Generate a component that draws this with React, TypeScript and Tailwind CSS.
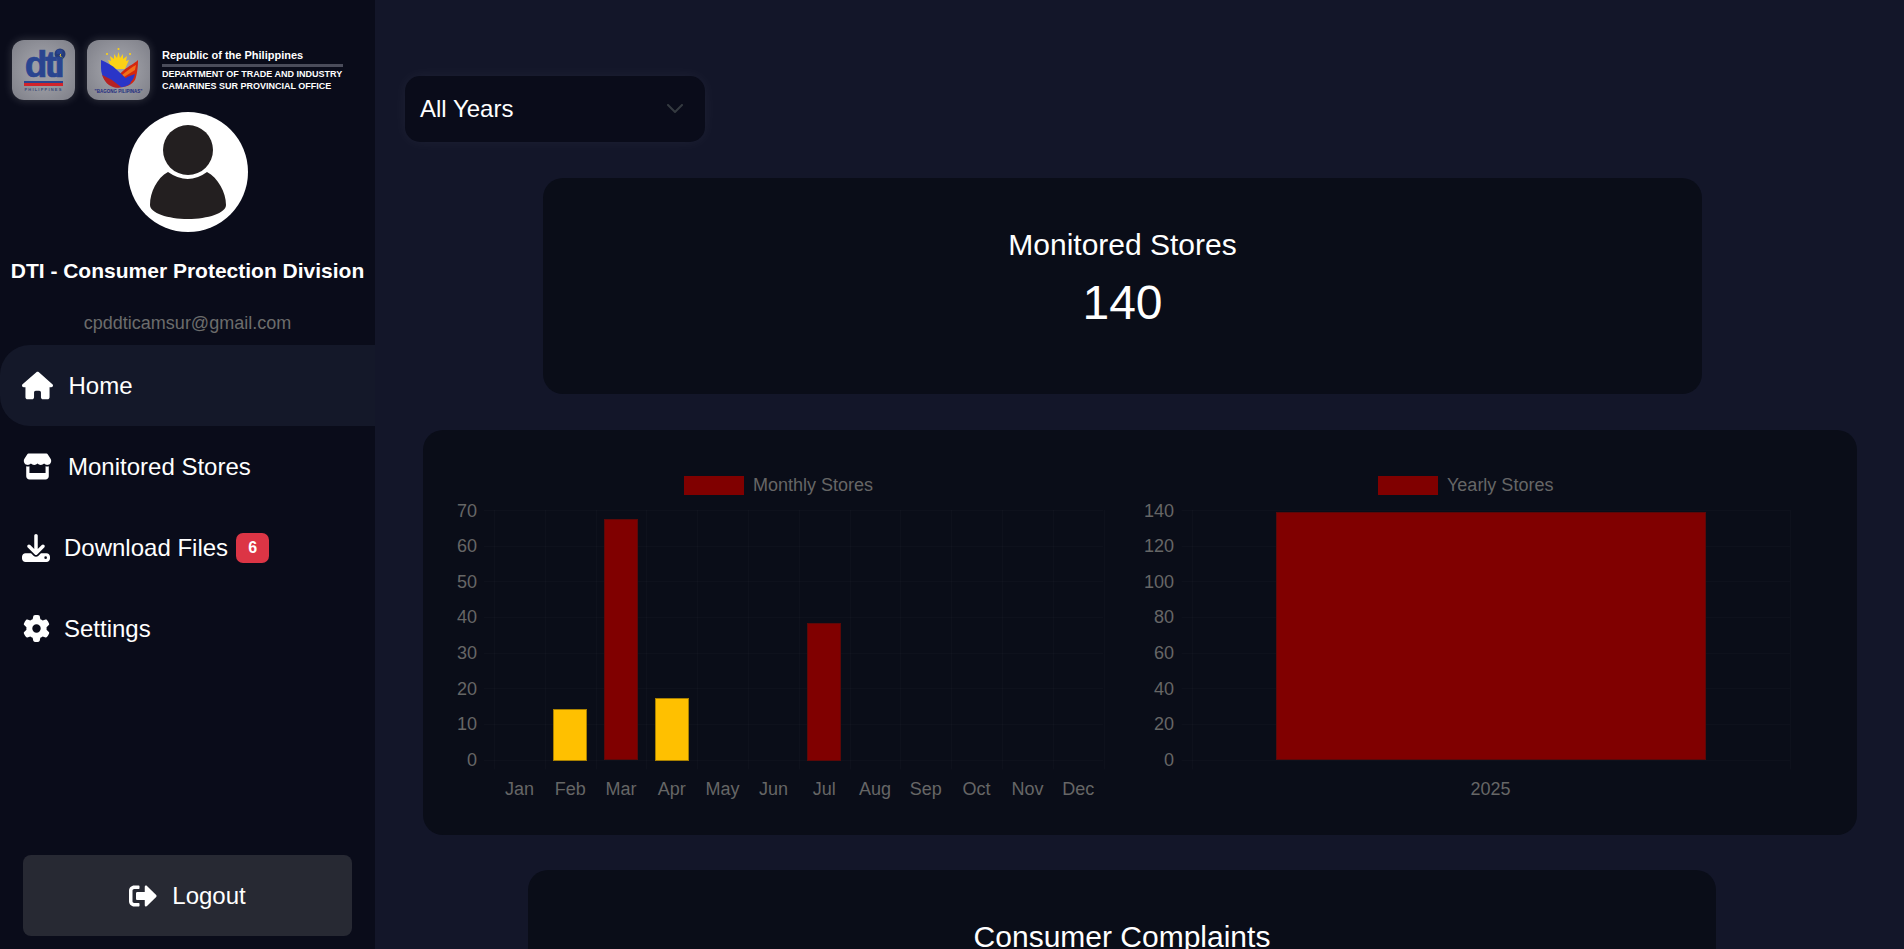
import React from "react";
import { FaHouse, FaStore, FaDownload, FaGear } from "react-icons/fa6";
import { FaSignOutAlt } from "react-icons/fa";

const months = ["Jan", "Feb", "Mar", "Apr", "May", "Jun", "Jul", "Aug", "Sep", "Oct", "Nov", "Dec"];
const monthly = [0, 14.3, 67.4, 17.3, 0, 0, 38.4, 0, 0, 0, 0, 0];

function Grid({ left, right, top, bottom, xs, rows }: { left: number; right: number; top: number; bottom: number; xs: number[]; rows: number }) {
  const ys = Array.from({ length: rows + 1 }, (_, i) => Math.round(top + ((bottom - top) * i) / rows) + 0.5);
  return (
    <g className="stroke-[#ffffff05]">
      {ys.map((y) => (
        <line key={y} x1={left - 10} x2={right} y1={y} y2={y} />
      ))}
      {xs.map((x) => (
        <line key={x} x1={Math.round(x) + 0.5} x2={Math.round(x) + 0.5} y1={top} y2={bottom + 10} />
      ))}
    </g>
  );
}

function MonthlyChart() {
  const left = 71;
  const step = 50.8;
  const top = 80;
  const bottom = 329.5;
  const unit = (bottom - top) / 70;
  return (
    <svg viewBox="0 0 717 405" className="w-[717px] h-[405px] shrink-0">
      <Grid left={left} right={680} top={top} bottom={bottom} xs={Array.from({ length: 13 }, (_, i) => left + i * step)} rows={7} />
      <rect x={261} y={46} width={60} height={19} className="fill-[#800000]" />
      <text x={330} y={61} className="fill-[#666666] text-[18px]">Monthly Stores</text>
      {[70, 60, 50, 40, 30, 20, 10, 0].map((v, i) => (
        <text key={v} x={54} y={top + (i * (bottom - top)) / 7 + 6.5} textAnchor="end" className="fill-[#666666] text-[18px]">{v}</text>
      ))}
      {months.map((m, i) => (
        <text key={m} x={left + step * (i + 0.5)} y={364.5} textAnchor="middle" className="fill-[#666666] text-[18px]">{m}</text>
      ))}
      {monthly.map((v, i) =>
        v > 0 ? (
          <rect
            key={i}
            x={Math.round(left + step * i + 8.4) + 0.5}
            y={Math.round(bottom - v * unit) + 0.5}
            width={33}
            height={Math.round(v * unit)}
            className={i === 1 || i === 3 ? "fill-[#ffc000] stroke-[#a88000]" : "fill-[#800000] stroke-[#5c0808]"}
          />
        ) : null
      )}
    </svg>
  );
}

function YearlyChart() {
  const top = 80;
  const bottom = 329.5;
  return (
    <svg viewBox="0 0 717 405" className="w-[717px] h-[405px] shrink-0">
      <Grid left={51.5} right={650} top={top} bottom={bottom} xs={[51.5, 650]} rows={7} />
      <rect x={238} y={46} width={60} height={19} className="fill-[#800000]" />
      <text x={307} y={61} className="fill-[#666666] text-[18px]">Yearly Stores</text>
      {[140, 120, 100, 80, 60, 40, 20, 0].map((v, i) => (
        <text key={v} x={34} y={top + (i * (bottom - top)) / 7 + 6.5} textAnchor="end" className="fill-[#666666] text-[18px]">{v}</text>
      ))}
      <text x={350.5} y={364.5} textAnchor="middle" className="fill-[#666666] text-[18px]">2025</text>
      <rect x={136.5} y={82.5} width={429} height={247} className="fill-[#800000] stroke-[#5c0808]" />
    </svg>
  );
}

function DtiLogo() {
  return (
    <div className="w-[63px] h-[60px] rounded-[12px] bg-[radial-gradient(circle,#9c9da4_30%,#7d7e87_100%)] shadow-[0_0_10px_rgba(255,255,255,0.18)] relative overflow-hidden flex flex-col items-center">
      <svg viewBox="0 0 63 60" className="absolute inset-0 w-full h-full">
        <circle cx="48" cy="14" r="5.5" fill="#243a78" />
        <path d="M46 11l3 2-1 3 3 2" stroke="#e8c92f" strokeWidth="1" fill="none" />
        <rect x="12" y="41" width="39" height="2" fill="#2a4590" />
        <rect x="12" y="43" width="39" height="3" fill="#d2232a" />
      </svg>
      <span className="relative mt-[8px] h-[33px] text-[#2a4590] text-[37px] leading-[33px] font-bold tracking-[-2.5px] [-webkit-text-stroke:0.7px_#2a4590]">dti</span>
      <span className="relative mt-[6px] text-[4px] leading-[5px] tracking-[1.2px] text-[#3b4a78] font-bold">PHILIPPINES</span>
    </div>
  );
}

function PilipinasLogo() {
  return (
    <div className="w-[63px] h-[60px] rounded-[12px] bg-[radial-gradient(circle,#9c9da4_30%,#7d7e87_100%)] shadow-[0_0_10px_rgba(255,255,255,0.18)] relative overflow-hidden">
      <svg viewBox="0 0 63 60" className="absolute inset-0 w-full h-full">
        <g fill="#fcd116">
          <circle cx="20" cy="14" r="1.100" />
          <circle cx="31.500" cy="9" r="1.100" />
          <circle cx="43" cy="14" r="1.100" />
          <path d="M31.500 12l1.500 6 3-4 0 5 4-3-1 5 3-1-4 9H25l-4-9 3 1-1-5 4 3 0-5 3 4z" />
        </g>
        <path d="M51 20c-3 3-9 6-14 10l-13 12 5 5c8 1 15-1 19-7 2-5 3-13 3-20z" fill="#d4260e" />
        <path d="M49 25c-4 2-9 6-14 10l2 2 11-7z" fill="#f0701a" />
        <path d="M14 20c5 2 11 5 16 10l14 13c-4 4-10 5-14 4-10-2-16-10-16-19z" fill="#2a35c8" />
        <path d="M15 35c3 1 6 3 10 5l9 7c-2 1-6 1-8 0-6-2-9-7-11-12z" fill="#b52222" />
        <path d="M40 37l8-3c-1 4-3 8-8 11l-4-3z" fill="#2a35c8" />
      </svg>
      <span className="absolute left-0 right-0 top-[49px] text-center text-[4.500px] leading-[5px] font-bold text-[#1e2a80] whitespace-nowrap">"BAGONG PILIPINAS"</span>
    </div>
  );
}

function Avatar() {
  return (
    <svg viewBox="0 0 120 120" className="w-[120px] h-[120px] mt-[12px] mx-auto shrink-0">
      <circle cx="60" cy="60" r="60" fill="#ffffff" />
      <circle cx="60" cy="38" r="25" fill="#231f20" />
      <path d="M40 60Q60 74 79 60C90 66 98 80 98 93C98 101 80 107 60 107C40 107 22 101 22 93C22 80 29 66 40 60Z" fill="#231f20" />
    </svg>
  );
}

function NavItem({ icon, label, active, pad, textGap, badge }: { icon: React.ReactNode; label: string; active?: boolean; pad: string; textGap: string; badge?: string }) {
  return (
    <div className={`h-[81px] flex items-center text-white text-[24px] rounded-l-[30px] ${pad} ${active ? "bg-[#141829]" : ""}`}>
      {icon}
      <span className={textGap}>{label}</span>
      {badge ? (
        <span className="ml-[8px] w-[33px] h-[30px] rounded-[7px] bg-[#dc3545] text-white font-bold text-[16px] flex items-center justify-center">{badge}</span>
      ) : null}
    </div>
  );
}

export default function App() {
  return (
    <div className="h-screen w-full flex overflow-hidden bg-[#131629] font-['Liberation_Sans',Arial,sans-serif] text-white">
      <aside className="w-[375px] shrink-0 h-full bg-[#0a0c1a] flex flex-col pt-[40px]">
        <div className="flex items-center pl-[12px]">
          <DtiLogo />
          <div className="ml-[12px]"><PilipinasLogo /></div>
          <div className="ml-[12px] w-[181px] flex flex-col font-bold">
            <span className="text-[11px] leading-[13px] mt-[1px] whitespace-nowrap">Republic of the Philippines</span>
            <div className="h-[3px] bg-[#4a4c5a] mt-[2px] mb-[1px]" />
            <span className="text-[9px] leading-[12px] whitespace-nowrap">DEPARTMENT OF TRADE AND INDUSTRY</span>
            <span className="text-[9px] leading-[12px] whitespace-nowrap">CAMARINES SUR PROVINCIAL OFFICE</span>
          </div>
        </div>
        <Avatar />
        <div className="mt-[26px] text-center text-[21px] leading-[25px] font-bold whitespace-nowrap">DTI - Consumer Protection Division</div>
        <div className="mt-[29px] text-center text-[18px] leading-[22px] text-[#6c6c6c]">cpddticamsur@gmail.com</div>
        <nav className="mt-[11px] flex flex-col">
          <NavItem active pad="pl-[22px]" textGap="ml-[15.500px]" icon={<FaHouse className="text-[31px]" />} label="Home" />
          <NavItem pad="pl-[23px]" textGap="ml-[16px]" icon={<FaStore className="text-[29px]" />} label="Monitored Stores" />
          <NavItem pad="pl-[22px]" textGap="ml-[14px]" icon={<FaDownload className="text-[28px]" />} label="Download Files" badge="6" />
          <NavItem pad="pl-[23px]" textGap="ml-[14px]" icon={<FaGear className="text-[27px]" />} label="Settings" />
        </nav>
        <div className="mt-auto mb-[13px] mx-[23px] h-[81px] rounded-[8px] bg-[#272933] flex items-center justify-center gap-[15px] text-[24px]">
          <FaSignOutAlt className="text-[28px]" />
          <span>Logout</span>
        </div>
      </aside>
      <main className="flex-1 min-w-0 pt-[76px]">
        <div className="ml-[30px] w-[300px] h-[66px] rounded-[15px] bg-[#0a0c1a] shadow-[0_0_15px_rgba(255,255,255,0.05)] flex items-center justify-between pl-[15px] pr-[22px] text-[24px]">
          <span>All Years</span>
          <svg viewBox="0 0 16 10" className="w-[16px] h-[10px]">
            <path d="M1 1l7 7 7-7" fill="none" stroke="#343a40" strokeWidth="2" strokeLinecap="round" strokeLinejoin="round" />
          </svg>
        </div>
        <section className="mt-[36px] ml-[168px] w-[1159px] h-[216px] rounded-[20px] bg-[#0a0d18] flex flex-col items-center pt-[49px]">
          <div className="text-[30px] leading-[36px]">Monitored Stores</div>
          <div className="mt-[11px] text-[48px] leading-[58px]">140</div>
        </section>
        <section className="mt-[36px] ml-[48px] w-[1434px] h-[405px] rounded-[20px] bg-[#0a0d18] flex">
          <MonthlyChart />
          <YearlyChart />
        </section>
        <section className="mt-[35px] ml-[153px] w-[1188px] h-[216px] rounded-[20px] bg-[#0a0d18] flex flex-col items-center pt-[49px]">
          <div className="text-[30px] leading-[36px]">Consumer Complaints</div>
        </section>
      </main>
    </div>
  );
}
